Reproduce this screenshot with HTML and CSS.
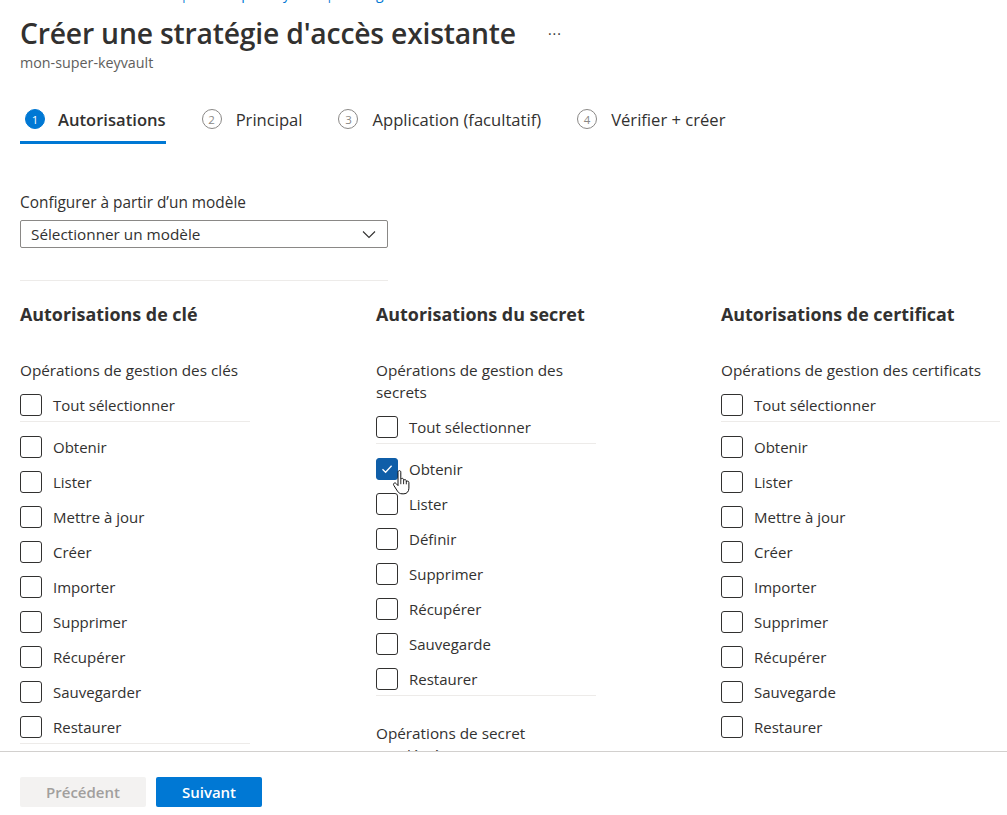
FILE: index.html
```html
<!DOCTYPE html>
<html lang="fr">
<head>
<meta charset="utf-8">
<title>Créer une stratégie d'accès existante</title>
<link rel="stylesheet" href="styles.css">
</head>
<body>
<div class="page">
  <div class="scroll">
    <nav class="breadcrumb">Accueil &gt; Coffres de clés | mon-super-keyvault | Stratégies d'accès &gt;</nav>
    <header class="title-row">
      <h1>Créer une stratégie d'accès existante</h1>
      <span class="more">···</span>
    </header>
    <div class="subtitle">mon-super-keyvault</div>

    <div class="tabs">
      <div class="tab active"><span class="num">1</span><span class="tab-label">Autorisations</span></div>
      <div class="tab"><span class="num">2</span><span class="tab-label">Principal</span></div>
      <div class="tab"><span class="num">3</span><span class="tab-label">Application (facultatif)</span></div>
      <div class="tab"><span class="num">4</span><span class="tab-label">Vérifier + créer</span></div>
    </div>

    <section class="template">
      <label class="field-label">Configurer à partir d’un modèle</label>
      <div class="dropdown">
        <span>Sélectionner un modèle</span>
        <svg class="chev" width="16" height="16" viewBox="0 0 16 16"><path d="M2 5.5 L8 11.5 L14 5.5" fill="none" stroke="#323130" stroke-width="1.1"/></svg>
      </div>
    </section>

    <div class="columns">
      <div class="col col-key">
        <h2>Autorisations de clé</h2>
        <p class="group">Opérations de gestion des clés</p>
        <div class="cb select-all"><span class="box"></span>Tout sélectionner</div>
        <div class="list">
          <div class="cb"><span class="box"></span>Obtenir</div>
          <div class="cb"><span class="box"></span>Lister</div>
          <div class="cb"><span class="box"></span>Mettre à jour</div>
          <div class="cb"><span class="box"></span>Créer</div>
          <div class="cb"><span class="box"></span>Importer</div>
          <div class="cb"><span class="box"></span>Supprimer</div>
          <div class="cb"><span class="box"></span>Récupérer</div>
          <div class="cb"><span class="box"></span>Sauvegarder</div>
          <div class="cb"><span class="box"></span>Restaurer</div>
        </div>
      </div>

      <div class="col col-secret">
        <h2>Autorisations du secret</h2>
        <p class="group">Opérations de gestion des secrets</p>
        <div class="cb select-all"><span class="box"></span>Tout sélectionner</div>
        <div class="list">
          <div class="cb checked"><span class="box"><svg width="14" height="14" viewBox="0 0 14 14"><path d="M2.5 7.2 L5.6 10.2 L11.6 3.8" fill="none" stroke="#fff" stroke-width="1.3"/></svg><svg class="cursor" width="20" height="26" viewBox="0 0 20 26"><path d="M6 2.2c0-1 .6-1.6 1.4-1.6s1.4.6 1.4 1.6v7.3c.3-.8.9-1.1 1.5-1.1.8 0 1.3.6 1.3 1.5v.6c.3-.6.8-.9 1.4-.9.8 0 1.3.6 1.3 1.5v.8c.3-.5.7-.8 1.3-.8.8 0 1.3.6 1.3 1.5v5.6c0 3.2-2 5.6-5 5.6H10c-2.1 0-3.4-1-4.5-2.6L1.9 15.5c-.6-.9-.5-1.8.2-2.3.7-.5 1.5-.3 2.1.4L6 15.6Z" fill="#fff" stroke="#111" stroke-width="1"/><path d="M8.8 10v4.2M11.6 10.6v3.6M14.3 11.5v2.8" stroke="#111" stroke-width=".9" fill="none"/></svg></span>Obtenir</div>
          <div class="cb"><span class="box"></span>Lister</div>
          <div class="cb"><span class="box"></span>Définir</div>
          <div class="cb"><span class="box"></span>Supprimer</div>
          <div class="cb"><span class="box"></span>Récupérer</div>
          <div class="cb"><span class="box"></span>Sauvegarde</div>
          <div class="cb"><span class="box"></span>Restaurer</div>
        </div>
        <p class="group">Opérations de secret privilégiées</p>
      </div>

      <div class="col col-cert">
        <h2>Autorisations de certificat</h2>
        <p class="group">Opérations de gestion des certificats</p>
        <div class="cb select-all"><span class="box"></span>Tout sélectionner</div>
        <div class="list">
          <div class="cb"><span class="box"></span>Obtenir</div>
          <div class="cb"><span class="box"></span>Lister</div>
          <div class="cb"><span class="box"></span>Mettre à jour</div>
          <div class="cb"><span class="box"></span>Créer</div>
          <div class="cb"><span class="box"></span>Importer</div>
          <div class="cb"><span class="box"></span>Supprimer</div>
          <div class="cb"><span class="box"></span>Récupérer</div>
          <div class="cb"><span class="box"></span>Sauvegarde</div>
          <div class="cb"><span class="box"></span>Restaurer</div>
          <div class="cb"><span class="box"></span></div>
        </div>
      </div>
    </div>
  </div>

  <footer class="footer">
    <button class="btn btn-disabled" disabled>Précédent</button>
    <button class="btn btn-primary">Suivant</button>
  </footer>
</div>
</body>
</html>
```

FILE: styles.css
```css
* { box-sizing: border-box; }
html, body { margin: 0; padding: 0; background: #fff; }
body {
  font-family: "Open Sans", "Noto Sans", "Liberation Sans", sans-serif;
  color: #323130;
  font-size: 15px;
  overflow: hidden;
}
.page {
  width: 1007px;
  height: 815px;
  display: flex;
  flex-direction: column;
}
.scroll {
  height: 751px;
  overflow: hidden;
  padding: 0 20px;
  flex: none;
}
.breadcrumb {
  margin-top: -16px;
  height: 19px;
  line-height: 19px;
  font-size: 14px;
  color: #0078d4;
  padding-left: 0;
  white-space: nowrap;
}
.title-row {
  display: flex;
  align-items: center;
  margin-top: 12px;
  height: 36px;
}
h1 {
  margin: 0;
  font-size: 28.3px;
  font-weight: 600;
  line-height: 36px;
  letter-spacing: -0.2px;
  color: #323130;
}
.more {
  margin-left: 32px;
  font-size: 14px;
  color: #323130;
  letter-spacing: 1px;
}
.subtitle {
  font-size: 14.3px;
  color: #605e5c;
  line-height: 18px;
  margin-top: 3px;
}
.tabs {
  display: flex;
  gap: 36px;
  margin-top: 27px;
  height: 45px;
}
.tab {
  display: flex;
  align-items: center;
  gap: 14px;
  height: 45px;
  padding-bottom: 2px;
  border-bottom: 3px solid transparent;
  font-size: 16.6px;
  color: #323130;
}
.tab.active {
  border-bottom-color: #0078d4;
  font-weight: 600;
  padding-left: 5px;
  gap: 13px;
}
.num {
  width: 20px;
  height: 20px;
  border-radius: 50%;
  border: 1px solid #8a8886;
  color: #8a8886;
  font-size: 11.5px;
  font-weight: 400;
  display: flex;
  align-items: center;
  justify-content: center;
  flex: none;
}
.tab.active .num {
  background: #0078d4;
  border-color: #0078d4;
  color: #fff;
}
.template {
  width: 368px;
  margin-top: 48px;
  border-bottom: 1px solid #edebe9;
  padding-bottom: 32px;
}
.field-label {
  display: block;
  font-size: 15.4px;
  line-height: 22px;
}
.dropdown {
  margin-top: 6px;
  height: 28px;
  border: 1px solid #8a8886;
  border-radius: 2px;
  display: flex;
  align-items: center;
  justify-content: space-between;
  padding: 0 10px 0 10px;
  font-size: 15.3px;
  color: #323130;
}
.chev { flex: none; }
.columns {
  display: grid;
  grid-template-columns: 356px 345px 1fr;
  margin-top: 21px;
}
.col-key { width: 230px; }
.col-secret { width: 220px; }
.col-cert { width: 279px; }
h2 {
  margin: 0;
  font-size: 17.9px;
  font-weight: 700;
  line-height: 24px;
}
.group {
  margin: 33px 0 0;
  font-size: 15.3px;
  line-height: 22px;
}
.cb {
  display: flex;
  align-items: center;
  gap: 11px;
  height: 32px;
  font-size: 15px;
}
.box {
  position: relative;
  width: 22px;
  height: 22px;
  border: 1px solid #323130;
  border-radius: 3px;
  flex: none;
  display: flex;
  align-items: center;
  justify-content: center;
}
.cb.checked .box {
  background: #0f5ea8;
  border-color: #0f5ea8;
}
.cursor {
  position: absolute;
  left: 15px;
  top: 11px;
}
.select-all {
  margin-top: 8px;
  border-bottom: 1px solid #edebe9;
  height: 33px;
}
.list {
  display: flex;
  flex-direction: column;
  gap: 3px;
  padding-top: 9px;
  border-bottom: 1px solid #edebe9;
}
.col-cert .list { border-bottom: none; }
.col .list + .group { margin-top: 26px; }
.footer {
  flex: none;
  height: 64px;
  border-top: 1px solid #d2d0ce;
  display: flex;
  gap: 10px;
  padding: 25px 20px 0;
}
.btn {
  height: 30px;
  border: none;
  border-radius: 2px;
  font-family: inherit;
  font-size: 15px;
  font-weight: 600;
  padding: 0;
}
.btn-disabled {
  width: 126px;
  background: #f3f2f1;
  color: #a19f9d;
}
.btn-primary {
  width: 106px;
  background: #0078d4;
  color: #fff;
}
```
